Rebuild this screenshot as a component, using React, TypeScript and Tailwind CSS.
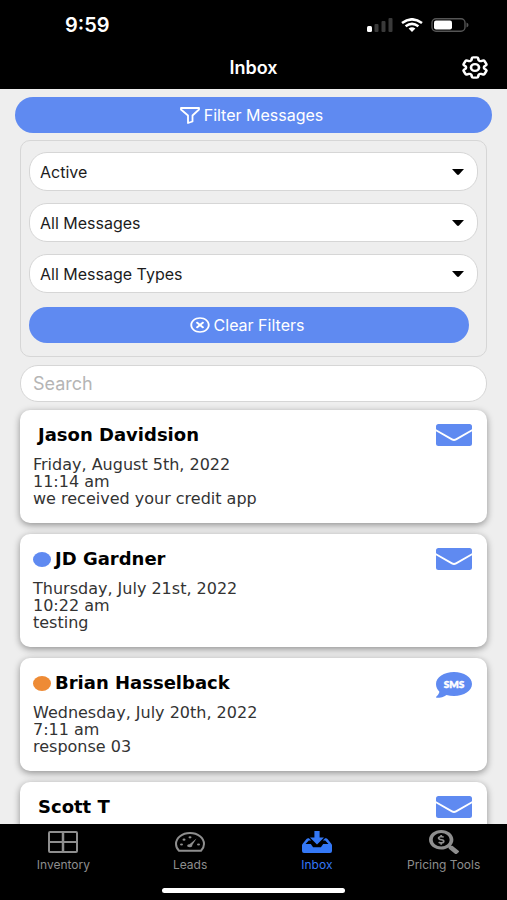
import { useState } from 'react'
import { FaRegTimesCircle, FaSearchDollar } from 'react-icons/fa'
import { HiOutlineCog6Tooth } from 'react-icons/hi2'

interface Message {
  name: string
  kind: 'email' | 'sms'
  dot?: string
  lines: string[]
}

const MESSAGES: Message[] = [
  { name: 'Jason Davidsion', kind: 'email', lines: ['Friday, August 5th, 2022', '11:14 am', 'we received your credit app'] },
  { name: 'JD Gardner', kind: 'email', dot: 'bg-[#5f8af1]', lines: ['Thursday, July 21st, 2022', '10:22 am', 'testing'] },
  { name: 'Brian Hasselback', kind: 'sms', dot: 'bg-[#ee8b35]', lines: ['Wednesday, July 20th, 2022', '7:11 am', 'response 03'] },
  { name: 'Scott T', kind: 'email', lines: [] },
]

const FILTERS = [
  { label: 'Status', options: ['Active', 'Archived'] },
  { label: 'Messages', options: ['All Messages', 'Unread'] },
  { label: 'Message type', options: ['All Message Types', 'Email', 'SMS'] },
]

function FunnelIcon() {
  return (
    <svg viewBox="0 0 20 17" className="w-5 h-[17px]" fill="none" stroke="currentColor" strokeWidth="1.800" strokeLinejoin="round">
      <path d="M1 1h18v1.500L12.500 8.500v6L8 16V8.500L1 2.500Z" />
    </svg>
  )
}

function EnvelopeIcon() {
  return (
    <svg viewBox="0 0 36 22" className="w-9 h-[22px]" fill="#5f8af1" aria-label="Email">
      <path d="M2.500 0h31a2.500 2.500 0 0 1 2.500 2.500v2.700L19.600 14.600q-1.600.9-3.200 0L0 5.200V2.500A2.500 2.500 0 0 1 2.500 0Z" />
      <path d="M0 7.200 15.500 16.300q2.500 1.300 5 0L36 7.200V19.500a2.500 2.500 0 0 1-2.500 2.500h-31A2.500 2.500 0 0 1 0 19.500Z" />
    </svg>
  )
}

function SmsIcon() {
  return (
    <svg viewBox="0 0 36 26" className="w-9 h-[26px]" aria-label="SMS">
      <path fill="#5f8af1" d="M18 0c10 0 18 5.300 18 12s-8 12-18 12c-2.700 0-5.200-.4-7.500-1.100C8 24.800 4.500 25.800.6 25.800c-.6 0-.8-.6-.4-1 1.900-1.800 2.900-3.500 3.200-5.100C1.300 17.600 0 14.900 0 12 0 5.300 8 0 18 0Z" />
      <text x="18" y="15.500" textAnchor="middle" fill="#fff" stroke="#fff" strokeWidth=".5" fontSize="10" fontWeight="900" fontFamily="Lato, sans-serif">SMS</text>
    </svg>
  )
}

function GridIcon() {
  return (
    <svg viewBox="0 0 30 22" className="w-[30px] h-[22px]" fill="none" stroke="currentColor" strokeWidth="2">
      <rect x="1" y="1" width="28" height="20" rx="1" />
      <path strokeWidth="2.500" d="M15 1v20" />
      <path d="M1 11h28" />
    </svg>
  )
}

function GaugeIcon() {
  return (
    <svg viewBox="0 0 30 20" className="w-[30px] h-5" fill="currentColor">
      <path
        fill="none"
        stroke="currentColor"
        strokeWidth="2"
        strokeLinejoin="round"
        d="M4 18.800h22q3-3 3-6.800C29 6 23 1 15 1S1 6 1 12q0 3.800 3 6.800Z"
      />
      <path d="m21.500 6.500-4.300 6.800q.6 1.700-2.200 1.900-3 0-2.800-1.600.3-1.300 2.300-1.300Z" />
      <ellipse cx="6.500" cy="12.500" rx="1.500" ry="1.100" />
      <ellipse cx="9" cy="7.700" rx="1.500" ry="1.100" />
      <ellipse cx="15" cy="5.300" rx="1.500" ry="1.100" />
      <ellipse cx="23.500" cy="12.500" rx="1.500" ry="1.100" />
    </svg>
  )
}

function TrayIcon() {
  return (
    <svg viewBox="0 0 30 22" className="w-[30px] h-[22px]" fill="currentColor">
      <path d="M12.400 0h5.200v6.500H22L15 13.500 8 6.500h4.400Z" />
      <path d="M6.200 7.200h.7l2.200 2.200H6.800L3.500 13h5.300l2.300 3.300h7.800l2.300-3.300h5.300l-3.300-3.600h-2.300l2.200-2.200h.9q.9 0 1.500.7l4 5q.5.6.5 1.400V20q0 2-2 2H2q-2 0-2-2v-5.700q0-.8.500-1.400l4-5q.7-.7 1.700-.7Z" />
    </svg>
  )
}

function StatusBar() {
  return (
    <div className="flex items-center justify-between h-[50px] pl-[65px] pr-[38px]">
      <span className="text-xl font-semibold">9:59</span>
      <div className="flex items-center gap-2">
        <svg viewBox="0 0 26 14" className="w-[26px] h-3.5" fill="#3a3a3a">
          <rect x="0" y="8" width="5" height="6" rx="1.500" fill="#fff" />
          <rect x="7.500" y="6" width="4" height="8" rx="1" />
          <rect x="14.500" y="3" width="4" height="11" rx="1" />
          <rect x="21.500" y="0" width="4" height="14" rx="1" />
        </svg>
        <svg viewBox="0 0 22 14" className="w-[22px] h-3.5" fill="none" stroke="#fff" strokeWidth="2.600">
          <path d="M1 5Q11-2.400 21 5" />
          <path d="M4.600 8.300Q11 3.600 17.400 8.300" />
          <path d="M7.600 10.500Q11 8 14.400 10.500L11 14Z" fill="#fff" stroke="none" />
        </svg>
        <svg viewBox="0 0 38 14" className="w-[38px] h-3.5" fill="none">
          <rect x="1" y=".7" width="33" height="12.600" rx="4" stroke="#555" strokeWidth="1.400" />
          <rect x="3" y="2.500" width="18" height="9" rx="2" fill="#fff" />
          <path d="M35.500 4.500q2 .6 2 2.500t-2 2.500Z" fill="#555" />
        </svg>
      </div>
    </div>
  )
}

function MessageCard({ message }: { message: Message }) {
  return (
    <article className="flex justify-between items-start min-h-[113px] pl-[13px] pr-[15px] pt-3 pb-4 rounded-[10px] bg-white shadow-[0_2px_7px_rgba(0,0,0,0.4)]">
      <div className="font-['DejaVu_Sans',sans-serif]">
        <h2 className="flex items-center gap-1 h-[26px] text-lg font-bold text-black">
          {message.dot
            ? <span className={`w-[18px] h-[15px] rounded-[50%] ${message.dot}`} />
            : <span className="w-px" />}
          {message.name}
        </h2>
        <div className="mt-2 text-base leading-[17px] text-[#333]">
          {message.lines.map(line => <p key={line}>{line}</p>)}
        </div>
      </div>
      <div className="pt-0.5">{message.kind === 'email' ? <EnvelopeIcon /> : <SmsIcon />}</div>
    </article>
  )
}

const TABS = [
  { label: 'Inventory', icon: <GridIcon /> },
  { label: 'Leads', icon: <GaugeIcon /> },
  { label: 'Inbox', icon: <TrayIcon /> },
  { label: 'Pricing Tools', icon: <FaSearchDollar className="w-[30px] h-6" preserveAspectRatio="none" /> },
]

export default function App() {
  const [search, setSearch] = useState('')

  return (
    <div className="flex flex-col h-screen bg-[#eee] font-['Inter',sans-serif]">
      <header className="shrink-0 bg-black text-white">
        <StatusBar />
        <div className="grid grid-cols-[1fr_auto_1fr] items-center h-[39px] px-4 pb-1">
          <h1 className="col-start-2 text-lg font-semibold">Inbox</h1>
          <button aria-label="Settings" className="justify-self-end">
            <HiOutlineCog6Tooth className="w-8 h-[27px]" strokeWidth={2} preserveAspectRatio="none" />
          </button>
        </div>
      </header>

      <main className="flex-1 min-h-0 overflow-y-auto [scrollbar-width:none] pt-2 pb-4">
        <div className="px-[15px]">
          <button className="flex items-center justify-center gap-1 w-full h-9 pr-1 rounded-[18px] bg-[#5f8af1] text-base text-white">
            <FunnelIcon />
            Filter Messages
          </button>
        </div>

        <div className="px-5 pt-[7px]">
          <section className="px-2 pt-[11px] pb-[13px] rounded-[10px] border border-[#d6d6d6]">
            <div className="space-y-3">
              {FILTERS.map(f => (
                <div key={f.label} className="grid items-center">
                  <select
                    aria-label={f.label}
                    className="col-start-1 row-start-1 appearance-none w-full h-[39px] px-2.5 rounded-[18px] border border-[#d6d6d6] bg-white text-base text-[#1c1c1c]"
                  >
                    {f.options.map(o => <option key={o}>{o}</option>)}
                  </select>
                  <svg viewBox="0 0 12 6" className="col-start-1 row-start-1 justify-self-end w-3 h-1.5 mr-3.5 pointer-events-none">
                    <path d="M0 0h12L7 5.500q-1 .8-2 0Z" />
                  </svg>
                </div>
              ))}
            </div>
            <div className="pt-3.5 pr-[9px]">
              <button className="flex items-center justify-center gap-1 w-full h-9 pr-1 rounded-[18px] bg-[#5f8af1] text-base text-white">
                <FaRegTimesCircle className="w-5 h-4" preserveAspectRatio="none" />
                Clear Filters
              </button>
            </div>
          </section>

          <input
            type="search"
            aria-label="Search"
            placeholder="Search"
            value={search}
            onChange={e => setSearch(e.target.value)}
            className="block w-full h-[37px] mt-2 px-3 rounded-[18px] border border-[#d6d6d6] bg-white text-lg placeholder:text-[#b5b5b5]"
          />

          <div className="mt-2 space-y-[11px]">
            {MESSAGES.map(m => <MessageCard key={m.name} message={m} />)}
          </div>
        </div>
      </main>

      <nav className="shrink-0 h-[76px] bg-black">
        <div className="grid grid-cols-4 h-16 pt-1.5">
          {TABS.map(t => (
            <a
              key={t.label}
              href="#"
              className={`flex flex-col items-center text-xs ${t.label === 'Inbox' ? 'text-[#3478f6]' : 'text-[#8e8e8e]'}`}
            >
              <span className="flex items-center h-6 mb-[3px]">{t.icon}</span>
              {t.label}
            </a>
          ))}
        </div>
        <div className="w-[36%] h-[5px] mx-auto rounded-full bg-white" />
      </nav>
    </div>
  )
}
